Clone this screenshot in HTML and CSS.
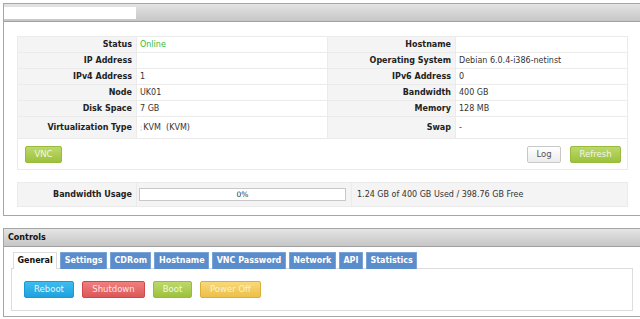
FILE: index.html
```html
<!DOCTYPE html>
<html>
<head>
<meta charset="utf-8">
<link rel="stylesheet" href="styles.css">
</head>
<body>
<div class="panel panel-top">
  <div class="panel-head"><span class="title-box"></span></div>
  <div class="panel-body">
    <table class="info">
      <colgroup><col class="c1"><col class="c2"><col class="c3"><col class="c4"></colgroup>
      <tr><th>Status</th><td class="online">Online</td><th>Hostname</th><td></td></tr>
      <tr><th>IP Address</th><td></td><th>Operating System</th><td>Debian 6.0.4-i386-netinst</td></tr>
      <tr><th>IPv4 Address</th><td>1</td><th>IPv6 Address</th><td>0</td></tr>
      <tr><th>Node</th><td>UK01</td><th>Bandwidth</th><td>400 GB</td></tr>
      <tr><th>Disk Space</th><td>7 GB</td><th>Memory</th><td>128 MB</td></tr>
      <tr class="virt"><th>Virtualization Type</th><td><span class="broken">;</span>KVM &nbsp;(KVM)</td><th>Swap</th><td>-</td></tr>
      <tr class="actions"><td colspan="4">
        <div class="actions-row">
          <button class="btn btn-green btn-vnc">VNC</button>
          <div class="actions-right">
            <button class="btn btn-white">Log</button>
            <button class="btn btn-green btn-refresh">Refresh</button>
          </div>
        </div>
      </td></tr>
    </table>
    <table class="bw">
      <colgroup><col class="b1"><col class="b2"><col class="b3"></colgroup>
      <tr>
        <th>Bandwidth Usage</th>
        <td class="bar-cell"><div class="bar">0%</div></td>
        <td class="bw-text">1.24 GB of 400 GB Used / 398.76 GB Free</td>
      </tr>
    </table>
  </div>
</div>

<div class="panel panel-controls">
  <div class="panel-head"><span class="head-title">Controls</span></div>
  <div class="panel-body controls-body">
    <div class="tabs">
      <span class="tab active">General</span>
      <span class="tab">Settings</span>
      <span class="tab">CDRom</span>
      <span class="tab">Hostname</span>
      <span class="tab">VNC Password</span>
      <span class="tab">Network</span>
      <span class="tab">API</span>
      <span class="tab">Statistics</span>
    </div>
    <div class="tab-content">
      <button class="btn btn-blue">Reboot</button>
      <button class="btn btn-red">Shutdown</button>
      <button class="btn btn-green btn-boot">Boot</button>
      <button class="btn btn-yellow">Power Off</button>
    </div>
  </div>
</div>
</body>
</html>
```

FILE: styles.css
```css
* { box-sizing: border-box; }
html, body { margin: 0; padding: 0; overflow: hidden; background: #fff; }
body {
  padding-top: 3px;
  font-family: "DejaVu Sans", Verdana, sans-serif;
  font-size: 8px;
  color: #222;
}
.panel {
  margin-left: 3px;
  width: 645px;
  border: 1px solid #a6a6a6;
  border-right: none;
}
.panel-head {
  height: 18px;
  background: linear-gradient(#e4e4e4, #c6c6c6);
  border-bottom: 1px solid #a0a0a0;
  display: flex;
  align-items: center;
}
.title-box {
  display: block;
  width: 132px;
  height: 12px;
  background: #fff;
}
.head-title {
  font-weight: bold;
  font-size: 8px;
  color: #111;
  margin-left: 4px;
}
.panel-top .panel-body {
  padding: 14px 0 8px 13px;
}
table {
  border-collapse: collapse;
  table-layout: fixed;
  width: 610px;
}
.c1 { width: 119px; }
.c2 { width: 191px; }
.c3 { width: 128px; }
.c4 { width: 172px; }
.info th, .info td, .bw th, .bw td {
  border: 1px solid #ebebeb;
  height: 16px;
  padding: 0 4px;
  font-size: 8px;
  white-space: nowrap;
  overflow: hidden;
}
.info th, .bw th {
  background: #f4f4f4;
  text-align: right;
  font-weight: bold;
  color: #222;
}
.info td { text-align: left; color: #333; padding-left: 3px; }
.info .virt th, .info .virt td { height: 22px; }
.online { color: #33bb33 !important; }
.broken { color: #7aa; font-size: 7px; margin-right: 1px; }
.info .actions td {
  height: 31px;
  padding: 0 6px 0 7px;
  background: #fff;
}
.actions-row {
  display: flex;
  justify-content: space-between;
  align-items: center;
}
.actions-right { display: flex; gap: 9px; }

.bw { margin-top: 12px; }
.b1 { width: 119px; }
.b2 { width: 215px; }
.b3 { width: 276px; }
.bw th, .bw td { height: 24px; background: #f4f4f4; }
.bw .bar-cell { padding: 0 2px; }
.bar {
  height: 13px;
  width: 207px;
  background: #fff;
  border: 1px solid #c8c8c8;
  text-align: center;
  font-size: 7.5px;
  line-height: 11px;
  color: #333;
}
.bw .bw-text { text-align: left; padding-left: 5px; color: #333; }

.btn {
  font-family: "DejaVu Sans", Verdana, sans-serif;
  font-size: 8.5px;
  height: 17px;
  padding: 0 8px;
  border-radius: 2px;
  border: 1px solid #999;
  color: #fff;
  line-height: 15px;
  cursor: pointer;
}
.btn-vnc { width: 37px; padding: 0; }
.btn-green {
  background: linear-gradient(#bcd96c, #9dc13c);
  border-color: #98bb3c;
  color: #f2f8e0;
}
.btn-white {
  background: linear-gradient(#ffffff, #ececec);
  border-color: #c8c8c8;
  color: #555;
  width: 34px;
  padding: 0;
}
.btn-refresh { width: 51px; padding: 0; }
.btn-blue {
  background: linear-gradient(#3fbcee, #1ea2dc);
  border-color: #1d98d0;
  color: #e4f5ff;
  width: 50px;
}
.btn-red {
  background: linear-gradient(#f07f7f, #dd5757);
  border-color: #cf4848;
  color: #ffe6e6;
  width: 63px;
}
.btn-yellow {
  background: linear-gradient(#f7d97a, #edbf48);
  border-color: #dcae3d;
  color: #fbf0d2;
  width: 61px;
}
.btn-boot { width: 39px; padding: 0; }
.panel-controls { margin-top: 12px; }
.controls-body { padding: 5px 4px 5px 7px; }
.tabs { display: flex; gap: 3px; margin-left: 2px; position: relative; z-index: 1; }
.tab {
  display: block;
  height: 17px;
  line-height: 16px;
  padding: 0 3.5px;
  font-weight: bold;
  font-size: 8px;
  color: #fff;
  background: #5b8ccb;
  border: 1px solid #7aa3d6;
  border-bottom: none;
}
.tab.active {
  background: #fff;
  color: #111;
  border-color: #dcdcdc;
}
.tab-content {
  margin-top: -1px;
  border: 1px solid #dcdcdc;
  width: 622px;
  height: 43px;
  padding: 12px;
  display: flex;
  gap: 8px;
}
```
